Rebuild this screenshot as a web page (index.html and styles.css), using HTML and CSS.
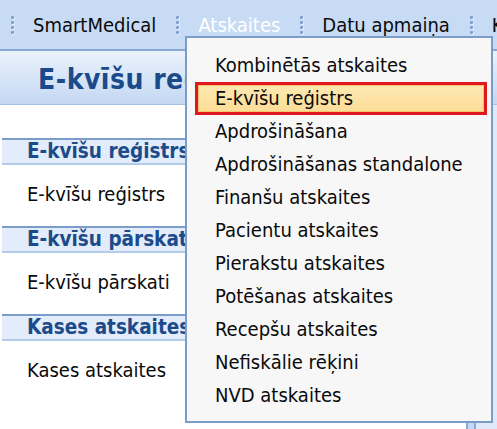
FILE: index.html
```html
<!DOCTYPE html>
<html lang="lv">
<head>
<meta charset="utf-8">
<title>E-kvīšu reģistrs</title>
<link rel="stylesheet" href="styles.css">
</head>
<body>
<div class="app">
  <nav class="menubar">
    <span class="grip"><i></i><i></i><i></i><i></i></span>
    <span class="mitem">SmartMedical</span>
    <span class="grip"><i></i><i></i><i></i><i></i></span>
    <span class="mitem active">Atskaites</span>
    <span class="grip"><i></i><i></i><i></i><i></i></span>
    <span class="mitem">Datu apmaiņa</span>
    <span class="grip"><i></i><i></i><i></i><i></i></span>
    <span class="mitem">K</span>
  </nav>
  <header class="titlebar">E-kvīšu reģistrs</header>
  <div class="content">
    <aside class="sidebar">
      <div class="sec-head">E-kvīšu reģistrs</div>
      <div class="sec-item">E-kvīšu reģistrs</div>
      <div class="sec-head">E-kvīšu pārskati</div>
      <div class="sec-item">E-kvīšu pārskati</div>
      <div class="sec-head">Kases atskaites</div>
      <div class="sec-item">Kases atskaites</div>
    </aside>
    <div class="splitter"></div>
    <main class="main"></main>
  </div>
  <ul class="dropdown">
    <li>Kombinētās atskaites</li>
    <li class="hl">E-kvīšu reģistrs</li>
    <li>Apdrošināšana</li>
    <li>Apdrošināšanas standalone</li>
    <li>Finanšu atskaites</li>
    <li>Pacientu atskaites</li>
    <li>Pierakstu atskaites</li>
    <li>Potēšanas atskaites</li>
    <li>Recepšu atskaites</li>
    <li>Nefiskālie rēķini</li>
    <li>NVD atskaites</li>
  </ul>
</div>
</body>
</html>
```

FILE: styles.css
```css
* { box-sizing: border-box; }
html, body {
  margin: 0;
  padding: 0;
  width: 497px;
  height: 429px;
  overflow: hidden;
  background: #ffffff;
}
body {
  font-family: "DejaVu Sans Condensed", "DejaVu Sans", sans-serif;
  font-size: 20px;
  color: #0a0a0a;
}
.app {
  position: relative;
  width: 497px;
  height: 429px;
  display: flex;
  flex-direction: column;
}
.menubar {
  height: 51px;
  flex: none;
  background: #c7dbf5;
  border-bottom: 2px solid #86a7d3;
  display: flex;
  align-items: center;
  padding: 0 0 0 11px;
  white-space: nowrap;
  overflow: hidden;
}
.grip {
  display: flex;
  flex-direction: column;
  gap: 2px;
  margin-right: 19px;
  flex: none;
}
.grip i {
  display: block;
  width: 3px;
  height: 3px;
  border-radius: 1px;
  background: #7fa1d0;
  box-shadow: 1px 1px 0 #e6effb;
}
.mitem {
  margin-right: 20px;
  color: #0a0a0a;
}
.mitem.active {
  color: #ffffff;
}
.titlebar {
  height: 54px;
  flex: none;
  background: linear-gradient(#eaf2fc, #c4d8f3);
  border-bottom: 1px solid #a9c3e6;
  padding: 3px 0 0 38px;
  display: flex;
  align-items: center;
  font-weight: bold;
  font-size: 28px;
  letter-spacing: 0.5px;
  color: #1b4a8b;
  white-space: nowrap;
  overflow: hidden;
}
.content {
  flex: 1;
  display: flex;
}
.sidebar {
  width: 466px;
  flex: none;
  background: #fff;
  padding: 33px 0 0 2px;
}
.sec-head {
  height: 27px;
  border-top: 2px solid #7c9cca;
  border-bottom: 2px solid #b4cbe9;
  background: #e2ecfa;
  color: #1c4b8b;
  font-weight: bold;
  font-size: 20.5px;
  line-height: 23px;
  padding-left: 25px;
  white-space: nowrap;
}
.sec-item {
  height: 61px;
  padding: 19px 0 0 25px;
  line-height: 20px;
  white-space: nowrap;
}
.splitter {
  width: 10px;
  flex: none;
  background: #c3d8f4;
  border-left: 2px solid #8aaad6;
  border-right: 2px solid #8aaad6;
}
.main {
  flex: 1;
  background: #dfeaf9;
}
.dropdown {
  position: absolute;
  left: 185px;
  top: 36px;
  width: 308px;
  margin: 0;
  padding: 11px 0 9px;
  list-style: none;
  background: #f7f7f7;
  border: 2px solid #7b9bc8;
}
.dropdown li {
  height: 33px;
  line-height: 33px;
  margin: 0 4px 0 8px;
  padding-left: 20px;
  white-space: nowrap;
}
.dropdown li.hl {
  background: linear-gradient(#feeab5, #fcdb94);
  outline: 3px solid #e0171c;
  outline-offset: -3px;
  box-shadow: inset 0 0 0 4px #f5c46f;
}
```
